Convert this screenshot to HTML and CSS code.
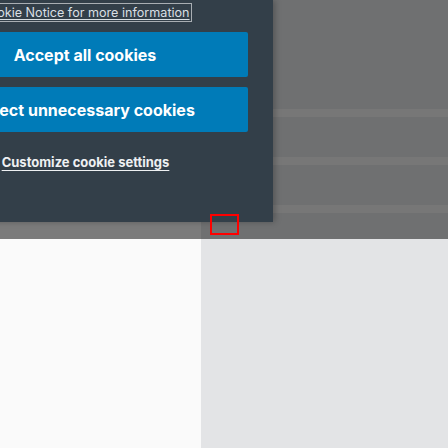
FILE: index.html
```html
<!DOCTYPE html>
<html lang="en">
<head>
<meta charset="utf-8">
<link rel="stylesheet" href="styles.css">
</head>
<body>
<div class="page">
  <div class="col-left"></div>
  <div class="col-right">
    <div class="stripe s1"></div>
    <div class="stripe s2"></div>
    <div class="stripe s3"></div>
  </div>
</div>
<div class="backdrop"></div>
<div class="panel">
  <div class="notice"><a class="notice-link" href="#">Cookie Notice for more information</a></div>
  <button class="btn">Accept all cookies</button>
  <button class="btn">Reject unnecessary cookies</button>
  <a class="customize" href="#">Customize cookie settings</a>
</div>
<div class="focus-box"></div>
</body>
</html>
```
FILE: styles.css
```css
html, body {
  margin: 0;
  padding: 0;
  width: 448px;
  height: 448px;
  overflow: hidden;
  font-family: Inter, "Noto Sans", sans-serif;
}
.page {
  display: grid;
  grid-template-columns: 201px 1fr;
  height: 448px;
}
.col-left {
  background: #fafafa;
}
.col-right {
  background: #e3e4e6;
  display: flex;
  flex-direction: column;
  padding-top: 109px;
  gap: 40px;
}
.stripe {
  height: 8px;
  background: #f2f2f2;
}
.backdrop {
  position: absolute;
  left: 0;
  top: 0;
  width: 448px;
  height: 239px;
  background: rgba(0, 0, 0, 0.51);
}
.panel {
  position: absolute;
  left: -100px;
  top: 0;
  width: 373px;
  height: 222px;
  box-sizing: border-box;
  background: #333f49;
  padding: 3px 25px 0 22px;
  display: flex;
  flex-direction: column;
  align-items: center;
  box-shadow: 2px 0 6px rgba(0, 0, 0, 0.25);
}
.notice {
  align-self: stretch;
  display: flex;
  justify-content: center;
  margin-left: 0;
}
.notice-link {
  display: inline-block;
  color: #d9dfe4;
  font-size: 12.6px;
  line-height: 17px;
  border: 1px solid #a9aeb3;
  padding: 0 1px;
  text-decoration: underline;
  text-underline-offset: 2px;
}
.btn {
  align-self: stretch;
  height: 45px;
  margin-top: 10px;
  border: none;
  border-radius: 2px;
  background: #007bb8;
  color: #ffffff;
  font-family: Inter, "Noto Sans", sans-serif;
  font-weight: 700;
  font-size: 16px;
  padding: 0;
  text-align: center;
}
.customize {
  margin-top: 20px;
  margin-left: 1px;
  color: #eef0f2;
  font-weight: 700;
  font-size: 13px;
  line-height: 20px;
  text-decoration: underline;
  text-underline-offset: 3px;
}
.focus-box {
  position: absolute;
  left: 210px;
  top: 214px;
  width: 25px;
  height: 17px;
  border: 2px solid #ff0000;
}
```
